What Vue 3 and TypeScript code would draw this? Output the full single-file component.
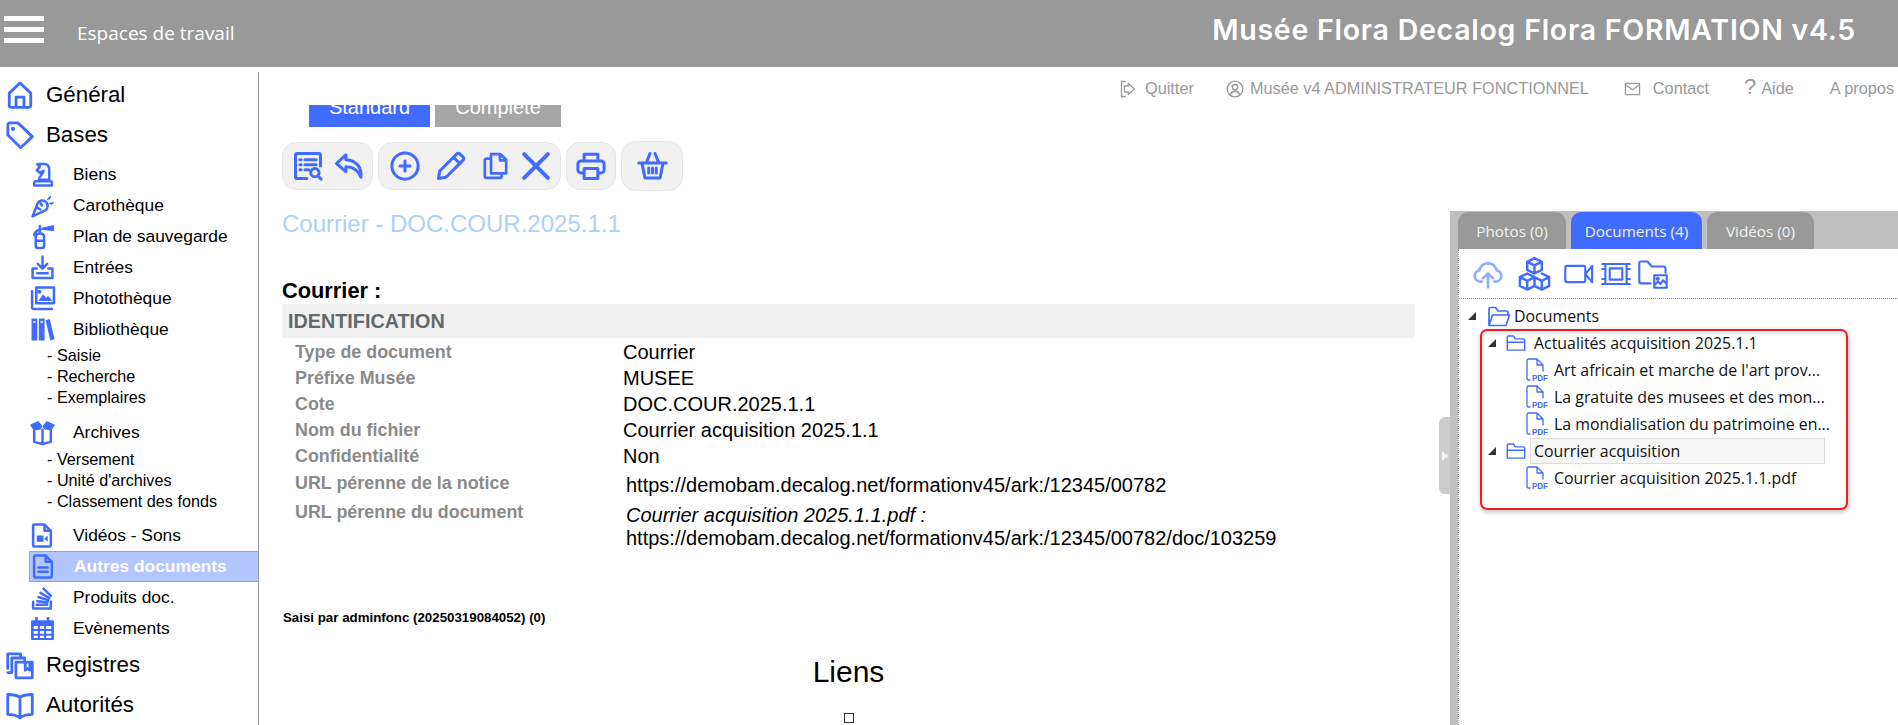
<script setup lang="ts">
interface Glyph {
  s?: string;
  f?: string;
}
interface MenuRow {
  label: string;
  level: 1 | 2 | 3;
  icon?: string;
  active?: boolean;
  gap?: number;
}

const icons: Record<string, Glyph> = {
  home: { s: "M12 1.8 2.8 10.4v10.4a1.8 1.8 0 0 0 1.8 1.8h14.8a1.8 1.8 0 0 0 1.8-1.8V10.4zM8.6 22.6v-8.8h6.8v8.8" },
  tag: { s: "M1.6 3.2a1.6 1.6 0 0 1 1.6-1.6h7L22.6 13.4 12.6 23 1.6 12z", f: "M6 5a1.8 1.8 0 1 1 0 3.6A1.8 1.8 0 0 1 6 5z" },
  knight: { s: "M7 2h6.5c3.5 0 5 2.5 5 6v9H8.5c0-3.5 4.5-5 4.5-8.5L9.5 10.5 6.5 8l3-3.5zM5.5 18.5h14a1.5 1.5 0 0 1 1.5 1.5v2.5H4V20a1.5 1.5 0 0 1 1.5-1.5z" },
  carrot: { s: "M2.5 22.5 7.5 9.5c2-3 6-3 8-.8s2 5.8-.5 7.8zM7 14l3 1.8M10 9.5l1.5 2.5", f: "M16 7c1-2 2.5-3.5 4.5-5-.2 3-1.5 5-4.5 5zM18 10c1.5-1 3.5-1.3 5.5-.8-1.5 2-3.5 2.5-5.5.8z" },
  extinguisher: { s: "M10 5.5c-3.5 0-5 1.5-6 5M9.5 9c-2.5 0-4 1.5-4 3.5v8.5A2 2 0 0 0 7.5 23h4a2 2 0 0 0 2-2v-8.5c0-2-1.5-3.5-4-3.5zM5.5 16h8M9.5 2v6", f: "M11 3.5 23 1v6l-12-1.5z" },
  entry: { s: "M12 1.5v11M7.5 8.5 12 13l4.5-4.5M6.5 13H2.5v9h19v-9h-4M7 17.5h10" },
  photos: { s: "M6 1.5h17v15H6zM2 5v15.5A1.5 1.5 0 0 0 3.5 22H21", f: "M8 14.5 12.5 8l3 3.5 2-2 4 5zM9 3.5a2 2 0 1 1 0 4 2 2 0 0 1 0-4z" },
  books: { f: "M1.5 1.5H7v21H1.5zM3 4v1.5h2.5V4zM8.5 1.5H14v21H8.5zM10 4v1.5h2.5V4zM15 3l4-1.2 4.5 19.5-4 1.2z" },
  archive: { s: "M4 10v11l8 2 8-2V10M12 9v14", f: "M0 4.5 8 1l4 5 4-5 8 3.5-3.5 5.5-6.5-1-2-3-2 3-6.5 1z" },
  video: { s: "M4 1.5h10l6 6V21a1.5 1.5 0 0 1-1.5 1.5h-14A1.5 1.5 0 0 1 3 21V2.5A1 1 0 0 1 4 1.5zM14 1.5v6h6", f: "M6.5 12H13v6H6.5zM13.5 15l3.5-3v6z" },
  doc: { s: "M4 1.5h10l6 6V21a1.5 1.5 0 0 1-1.5 1.5h-14A1.5 1.5 0 0 1 3 21V2.5A1 1 0 0 1 4 1.5zM14 1.5v6h6M7 13h9M7 17h9" },
  stack: { s: "M3 16v6.5h17V16M6.5 19h10M7 15.5l10 1M8 11.5l9.5 3M10 7.5l8.5 5M13 3.5l7 7" },
  calendar: { f: "M5 1h2.5v3H16V1h2.5v3H22a1 1 0 0 1 1 1v17a1 1 0 0 1-1 1H2a1 1 0 0 1-1-1V5a1 1 0 0 1 1-1h3zM3.5 9.5v3h4v-3zM9.5 9.5v3h4v-3zM15.5 9.5v3h5v-3zM3.5 14.5V17h4v-2.5zM9.5 14.5V17h4v-2.5zM15.5 14.5V17h5v-2.5zM3.5 19v2h4v-2zM9.5 19v2h4v-2zM15.5 19v2h5v-2z" },
  registers: { s: "M1.5 15V2.5h11v2M1.5 2.5h11M5 18.5V6h11v2M5 6h11M8.5 23V9.5h14V23zM8.5 9.5h14M16.5 9.5v7l2-1.5 2 1.500v-7M5 18.5H1.5" },
  book: { s: "M12 5.5C9.5 3.5 5.5 3 1.5 3v17c4 0 7.5.5 10.5 3 3-2.5 6.5-3 10.5-3V3c-4 0-8 .5-10.5 2.5zM12 5.5V23" },
  listSearch: { s: "M11 22H3.5A1.5 1.5 0 0 1 2 20.5v-17A1.5 1.5 0 0 1 3.5 2h17A1.5 1.5 0 0 1 22 3.5V12M5.5 7h1M9.5 7h9M5.5 11h1M9.5 11h9M5.5 15h1M9.500 15h3M17.5 14a3.3 3.3 0 1 1 0 6.6 3.3 3.3 0 0 1 0-6.6zM20 20l2.5 2.5" },
  reply: { s: "M9.5 3 2 10l7.5 6.5v-4c5 0 9.5 1.5 12 8.5 1-7-3-13.5-12-14z" },
  plus: { s: "M12 1.5a10.5 10.5 0 1 1 0 21 10.5 10.5 0 0 1 0-21zM12 8v8M8 12h8" },
  pencil: { s: "M2 22l1-6L16.5 2.5a2 2 0 0 1 2.8 0l2.2 2.2a2 2 0 0 1 0 2.8L8 21zM14 5l5 5" },
  copy: { s: "M8 1.5h8.5l5 5v12H8zM16 1.5V7h5.5M8 5.5H4A1.5 1.5 0 0 0 2.5 7v14.5a1 1 0 0 0 1 1H16a1.5 1.5 0 0 0 1.5-1.500v-2.500" },
  close: { s: "M2.5 2.5l19 19M21.5 2.5l-19 19" },
  printer: { s: "M6.5 8V2.5h11V8M6.5 17.5H4A2.5 2.5 0 0 1 1.5 15v-4.5A2.5 2.5 0 0 1 4 8h16a2.5 2.5 0 0 1 2.5 2.5V15a2.5 2.5 0 0 1-2.5 2.5h-2.5M6.5 14h11v8h-11z" },
  basket: { s: "M1 9.5h22M3.5 9.5 6 21.5h12l2.5-12M7 9.5 10 2M17 9.5 14 2M9 13.5v4M12 13.5v4M15 13.5v4" },
  cloud: { s: "M7 18H5.5A4.5 4.5 0 0 1 5 9.1a7.2 7.2 0 0 1 14 0A4.5 4.5 0 0 1 18.5 18H17M12 22.5V12M8 15.5l4-4 4 4" },
  cubes: { s: "M12 1.5l5 2.5v5.5L12 12 7 9.5V4zM7 4l5 2.5L17 4M12 6.5V12M7 12l5 2.5v6L7 23l-5-2.500v-6zM2 14.5 7 17l5-2.500M7 17v6M17 12l5 2.5v6L17 23l-5-2.500M12 14.5 17 17l5-2.500M17 17v6" },
  camera: { s: "M2.5 5.5h13A1.5 1.5 0 0 1 17 7v10a1.5 1.5 0 0 1-1.5 1.5h-13A1.5 1.5 0 0 1 1 17V7a1.5 1.5 0 0 1 1.5-1.5zM22.5 5.5 17 12l5.5 6.5z" },
  film: { s: "M1 4h22M1 20h22M7 7.5h10v9H7zM3.5 4v16M20.5 4v16M1 8h2.5M1 16h2.5M20.5 8H23M20.5 16H23" },
  folderImage: { s: "M10 19.5H2.5A1.5 1.5 0 0 1 1 18V3.5A1.5 1.5 0 0 1 2.5 2h5L11 6h9.5A1.5 1.5 0 0 1 22 7.5V11M13 13h10v10H13zM13 21l3-3 2 2 2-3 3 3M15.8 15a.8.8 0 1 1 0 1.6.8.8 0 0 1 0-1.6z" },
  folderOpen: { s: "M3 21V5a1.5 1.5 0 0 1 1.5-1.5h5L12 7h8.5A1.5 1.5 0 0 1 22 8.5V11M3 21.5h17L23.5 11H6.5z" },
  folder: { s: "M1.5 20.5V5A1.5 1.5 0 0 1 3 3.5h6L11 7h10a1.5 1.5 0 0 1 1.5 1.5v12zM1.5 11h21" },
  exit: { s: "M7 2H2v20h5M11 8V4.5l8 7.5-8 7.5V16H6V8z" },
  user: { s: "M12 1.5a10.5 10.5 0 1 1 0 21 10.5 10.5 0 0 1 0-21zM12 6a3.5 3.5 0 1 1 0 7 3.5 3.5 0 0 1 0-7zM6 19c1-3 3-4 6-4s5 1 6 4" },
  mail: { s: "M2 4h20v16H2zM2 6l10 7 10-7" },
};

const menu: MenuRow[] = [
  { label: "Général", level: 1, icon: "home" },
  { label: "Bases", level: 1, icon: "tag" },
  { label: "Biens", level: 2, icon: "knight", gap: 4 },
  { label: "Carothèque", level: 2, icon: "carrot" },
  { label: "Plan de sauvegarde", level: 2, icon: "extinguisher" },
  { label: "Entrées", level: 2, icon: "entry" },
  { label: "Photothèque", level: 2, icon: "photos" },
  { label: "Bibliothèque", level: 2, icon: "books" },
  { label: "- Saisie", level: 3 },
  { label: "- Recherche", level: 3 },
  { label: "- Exemplaires", level: 3 },
  { label: "Archives", level: 2, icon: "archive", gap: 9 },
  { label: "- Versement", level: 3, gap: 1 },
  { label: "- Unité d'archives", level: 3 },
  { label: "- Classement des fonds", level: 3 },
  { label: "Vidéos - Sons", level: 2, icon: "video", gap: 8 },
  { label: "Autres documents", level: 2, icon: "doc", active: true },
  { label: "Produits doc.", level: 2, icon: "stack" },
  { label: "Evènements", level: 2, icon: "calendar" },
  { label: "Registres", level: 1, icon: "registers", gap: 1 },
  { label: "Autorités", level: 1, icon: "book" },
];

const toolGroups: string[][] = [
  ["listSearch", "reply"],
  ["plus", "pencil", "copy", "close"],
  ["printer"],
  ["basket"],
];

const fields = [
  { label: "Type de document", value: "Courrier" },
  { label: "Préfixe Musée", value: "MUSEE" },
  { label: "Cote", value: "DOC.COUR.2025.1.1" },
  { label: "Nom du fichier", value: "Courrier acquisition 2025.1.1" },
  { label: "Confidentialité", value: "Non" },
];

const panelTools = ["cloud", "cubes", "camera", "film", "folderImage"];

const actuFiles = [
  "Art africain et marche de l'art prov...",
  "La gratuite des musees et des mon...",
  "La mondialisation du patrimoine en...",
];
</script>

<template>
  <div class="page">
    <header class="topbar">
      <div class="burger"><span></span><span></span><span></span></div>
      <div class="workspaces">Espaces de travail</div>
      <div class="app-title">Musée Flora Decalog Flora FORMATION v4.5</div>
    </header>

    <div class="body">
      <nav class="sidebar">
        <div
          v-for="row in menu"
          :key="row.label"
          class="menu-row"
          :class="[`level-${row.level}`, { active: row.active }]"
          :style="row.gap ? { marginTop: row.gap + 'px' } : undefined"
        >
          <span v-if="row.icon" class="menu-icon">
            <svg viewBox="0 0 24 24" class="ico">
              <path v-if="icons[row.icon].s" :d="icons[row.icon].s" class="line" />
              <path v-if="icons[row.icon].f" :d="icons[row.icon].f" class="solid" />
            </svg>
          </span>
          <span>{{ row.label }}</span>
        </div>
      </nav>

      <div class="content">
        <div class="links">
          <span class="link link-quit">
            <svg viewBox="0 0 24 24" class="ico link-ico"><path :d="icons.exit.s" class="line" /></svg>
            Quitter
          </span>
          <span class="link link-user">
            <svg viewBox="0 0 24 24" class="ico link-ico"><path :d="icons.user.s" class="line" /></svg>
            Musée v4 ADMINISTRATEUR FONCTIONNEL
          </span>
          <span class="link link-contact">
            <svg viewBox="0 0 24 24" class="ico link-ico"><path :d="icons.mail.s" class="line" /></svg>
            Contact
          </span>
          <span class="link link-help"><span class="qmark">?</span> Aide</span>
          <span class="link link-about">A propos</span>
        </div>

        <div class="columns">
          <main class="main">
            <div class="view-tabs">
              <div class="view-tab standard"><span>Standard</span></div>
              <div class="view-tab complete"><span>Complete</span></div>
            </div>

            <div class="toolbar">
              <div v-for="(group, i) in toolGroups" :key="i" class="tool-group" :class="`group-${i}`">
                <svg v-for="name in group" :key="name" viewBox="0 0 24 24" class="ico tool" :class="`tool-${name}`">
                  <path :d="icons[name].s" class="line" />
                </svg>
              </div>
            </div>

            <h2 class="notice-title">Courrier - DOC.COUR.2025.1.1</h2>
            <h3 class="notice-type">Courrier :</h3>
            <div class="section-bar">IDENTIFICATION</div>

            <div v-for="field in fields" :key="field.label" class="field">
              <div class="field-label">{{ field.label }}</div>
              <div class="field-value">{{ field.value }}</div>
            </div>
            <div class="field url-one">
              <div class="field-label">URL pérenne de la notice</div>
              <div class="field-value url">https://demobam.decalog.net/formationv45/ark:/12345/00782</div>
            </div>
            <div class="field url-two">
              <div class="field-label">URL pérenne du document</div>
              <div class="field-value url">
                <em>Courrier acquisition 2025.1.1.pdf :</em><br />
                https://demobam.decalog.net/formationv45/ark:/12345/00782/doc/103259
              </div>
            </div>

            <div class="entered-by">Saisi par adminfonc (20250319084052) (0)</div>
            <div class="links-title">Liens</div>
            <div class="links-box"></div>
          </main>

          <aside class="panel">
            <div class="panel-handle"><i></i></div>
            <div class="panel-tabs">
              <div class="panel-tab tab-photos">Photos (0)</div>
              <div class="panel-tab tab-docs">Documents (4)</div>
              <div class="panel-tab tab-videos">Vidéos (0)</div>
            </div>
            <div class="panel-inner">
              <div class="panel-tools">
                <svg
                  v-for="name in panelTools"
                  :key="name"
                  viewBox="0 0 24 24"
                  class="ico panel-tool"
                  :class="name"
                >
                  <path :d="icons[name].s" class="line" />
                </svg>
              </div>

              <div class="tree">
                <div class="tree-row root">
                  <i class="arrow"></i>
                  <svg viewBox="0 0 24 24" class="ico tree-folder-root"><path :d="icons.folderOpen.s" class="line" /></svg>
                  <span class="tree-label">Documents</span>
                </div>

                <div class="tree-row branch">
                  <i class="arrow"></i>
                  <svg viewBox="0 0 24 24" class="ico tree-folder"><path :d="icons.folder.s" class="line" /></svg>
                  <span class="tree-label">Actualités acquisition 2025.1.1</span>
                </div>
                <div v-for="file in actuFiles" :key="file" class="tree-row leaf">
                  <svg viewBox="0 0 22 24" class="pdf">
                    <path d="M4 22H2.5A1.5 1.5 0 0 1 1 20.5v-18A1.5 1.5 0 0 1 2.5 1H11l6 6v6M11 1v6h6" class="line thin" />
                    <text x="6" y="23" textLength="16" lengthAdjust="spacingAndGlyphs" class="pdf-text">PDF</text>
                  </svg>
                  <span class="tree-label">{{ file }}</span>
                </div>

                <div class="tree-row branch">
                  <i class="arrow"></i>
                  <svg viewBox="0 0 24 24" class="ico tree-folder"><path :d="icons.folder.s" class="line" /></svg>
                  <span class="tree-label selected">Courrier acquisition</span>
                </div>
                <div class="tree-row leaf">
                  <svg viewBox="0 0 22 24" class="pdf">
                    <path d="M4 22H2.5A1.5 1.5 0 0 1 1 20.5v-18A1.5 1.5 0 0 1 2.5 1H11l6 6v6M11 1v6h6" class="line thin" />
                    <text x="6" y="23" textLength="16" lengthAdjust="spacingAndGlyphs" class="pdf-text">PDF</text>
                  </svg>
                  <span class="tree-label">Courrier acquisition 2025.1.1.pdf</span>
                </div>
              </div>
            </div>
            <div class="highlight-box"></div>
          </aside>
        </div>
      </div>
    </div>
  </div>
</template>

<style scoped>
.page {
  height: 725px;
  overflow: hidden;
  display: flex;
  flex-direction: column;
  font-family: "Liberation Sans", Arial, sans-serif;
  color: #000;
  background: #fff;
}

/* Top bar */
.topbar {
  height: 67px;
  flex: none;
  background: #999;
  color: #fff;
  display: flex;
  align-items: center;
}

.burger {
  width: 40px;
  margin-left: 4px;
  margin-top: -8px;
  display: flex;
  flex-direction: column;
  gap: 6px;
}

.burger span {
  display: block;
  height: 5px;
  background: #fff;
}

.workspaces {
  margin-left: 33px;
  font-family: "Open Sans", sans-serif;
  font-size: 19px;
  margin-top: -1px;
}

.app-title {
  margin-left: auto;
  margin-right: 42px;
  margin-top: -9px;
  font-family: Inter, sans-serif;
  font-size: 28.5px;
  font-weight: 600;
  letter-spacing: 0.75px;
}

.body {
  flex: 1;
  min-height: 0;
  display: flex;
}

.ico {
  display: block;
  overflow: visible;
}

.line {
  fill: none;
  stroke: #3f6cff;
  stroke-width: 2;
  stroke-linejoin: round;
  stroke-linecap: round;
}

.line.thin {
  stroke-width: 1.3;
}

.solid {
  fill: #3f6cff;
  fill-rule: evenodd;
}

/* Sidebar */
.sidebar {
  width: 259px;
  flex: none;
  box-sizing: border-box;
  margin-top: 5px;
  padding-top: 3px;
  border-right: 1px solid #999;
}

.menu-row {
  display: flex;
  align-items: center;
  white-space: nowrap;
}

.menu-icon .line {
  stroke-width: 2.4;
}

.level-1 {
  height: 40px;
  font-size: 22.3px;
}

.level-1 .menu-icon {
  width: 46px;
  padding-left: 6px;
  box-sizing: border-box;
}

.level-1 .ico {
  width: 28px;
  height: 30px;
}

.level-2 {
  height: 31px;
  margin-left: 29px;
  font-size: 17.4px;
}

.level-2 .menu-icon {
  width: 44px;
  padding-left: 1px;
  box-sizing: border-box;
}

.level-2 .ico {
  width: 25px;
  height: 25px;
}

.level-3 {
  height: 21px;
  padding-left: 47px;
  font-size: 16.2px;
}

.active {
  box-sizing: border-box;
  background: #b3c6ff;
  border: 1px solid #84a0ff;
  border-right: none;
  color: #fff;
  font-weight: bold;
}

/* Content column */
.content {
  flex: 1;
  min-width: 0;
  display: flex;
  flex-direction: column;
}

.links {
  height: 38px;
  flex: none;
  display: flex;
  align-items: center;
  font-size: 16.3px;
  color: #999;
  white-space: nowrap;
  padding-top: 5px;
  box-sizing: border-box;
}

.link {
  display: flex;
  align-items: center;
  gap: 6px;
}

.link-ico {
  width: 18px;
  height: 18px;
}

.link-ico .line {
  stroke: #999;
  stroke-width: 1.8;
}

.link-quit {
  margin-left: 860px;
}

.link-quit .link-ico {
  width: 20px;
}

.link-user {
  margin-left: 32px;
}

.link-contact {
  margin-left: 35px;
}

.link-contact .link-ico {
  width: 17px;
  margin-right: 6px;
}

.link-help {
  margin-left: 35px;
  gap: 5px;
}

.qmark {
  font-size: 22px;
  line-height: 1;
  margin-top: -3px;
}

.link-about {
  margin-left: 36px;
}

.columns {
  flex: 1;
  min-height: 0;
  display: flex;
}

/* Main notice */
.main {
  flex: 1;
  min-width: 0;
  padding-left: 23px;
  padding-right: 35px;
}

.view-tabs {
  display: flex;
  gap: 5px;
  margin-left: 27px;
  height: 22px;
  overflow: hidden;
}

.view-tab {
  height: 22px;
  display: flex;
  align-items: flex-end;
  justify-content: center;
  color: #fff;
  font-size: 20px;
  line-height: 22px;
}

.view-tab span {
  display: block;
  margin-bottom: 9px;
  flex: none;
}

.standard {
  width: 121px;
  background: #3f6cff;
}

.complete {
  width: 126px;
  background: #a6a6a6;
}

.toolbar {
  margin-top: 14px;
  display: flex;
  align-items: center;
  gap: 5px;
  height: 50px;
}

.tool-group {
  height: 48px;
  box-sizing: border-box;
  display: flex;
  align-items: center;
  background: #f1f1f1;
  border: 1px solid #e6e6e6;
  border-radius: 14px;
}

.group-0 {
  width: 91px;
  padding-left: 10px;
  gap: 11px;
}

.group-1 {
  width: 183px;
  padding-left: 11px;
  gap: 16px;
}

.group-2 {
  width: 50px;
  justify-content: center;
}

.group-3 {
  width: 62px;
  height: 50px;
  justify-content: center;
}

.tool {
  width: 30px;
  height: 30px;
}

.tool .line {
  stroke-width: 2.4;
}

.tool-copy {
  width: 27px;
  margin-right: -4px;
}

.tool-close .line {
  stroke-width: 3.2;
}

.tool-basket {
  width: 33px;
}

.notice-title {
  margin: 20px 0 0;
  font-size: 24px;
  font-weight: normal;
  line-height: 26px;
  color: #add0fb;
}

.notice-type {
  margin: 42px 0 0;
  font-size: 21.8px;
  font-weight: bold;
  line-height: 24px;
}

.section-bar {
  height: 34px;
  margin-top: 1px;
  padding-left: 6px;
  background: #f1f1f1;
  color: #5f6b6b;
  font-size: 19.8px;
  font-weight: bold;
  line-height: 34px;
}

.field {
  display: flex;
  height: 26px;
  align-items: center;
  padding-left: 13px;
}

.section-bar + .field {
  margin-top: 1px;
}

.field-label {
  width: 328px;
  flex: none;
  color: #8a8a8a;
  font-size: 17.9px;
  font-weight: bold;
}

.field-value {
  font-size: 20px;
  white-space: nowrap;
}

.url {
  margin-left: 3px;
}

.url-one {
  height: 28px;
}

.url-one .url {
  padding-top: 4px;
}

.url-two {
  height: auto;
  align-items: flex-start;
  margin-top: 5px;
}

.url-two .field-value {
  line-height: 23px;
  padding-top: 2px;
}

.entered-by {
  margin-top: 60px;
  margin-left: 1px;
  font-size: 13.3px;
  font-weight: bold;
}

.links-title {
  margin-top: 31px;
  font-size: 30px;
  line-height: 32px;
  text-align: center;
}

.links-box {
  width: 8px;
  height: 8px;
  margin: 25px auto 0;
  border: 1px solid #333;
}

/* Right panel */
.panel {
  position: relative;
  width: 448px;
  flex: none;
  margin-top: 106px;
  box-sizing: border-box;
  border-left: 8px solid #c0c0c0;
  display: flex;
  flex-direction: column;
}

.panel-handle {
  position: absolute;
  left: -19px;
  top: 206px;
  width: 11px;
  height: 77px;
  background: #ccc;
  border-radius: 6px 0 0 6px;
  display: flex;
  align-items: center;
  justify-content: center;
}

.panel-handle i {
  border-left: 6px solid #f2f2f2;
  border-top: 5px solid transparent;
  border-bottom: 5px solid transparent;
}

.panel-tabs {
  height: 38px;
  flex: none;
  box-sizing: border-box;
  padding-top: 1px;
  display: flex;
  gap: 5px;
  background: #bfbfbf;
}

.panel-tab {
  display: flex;
  align-items: center;
  justify-content: center;
  border-radius: 10px 10px 0 0;
  background: #999;
  color: #f2f2f2;
  font-family: "Open Sans", sans-serif;
  font-size: 15.3px;
}

.tab-photos {
  width: 108px;
}

.tab-docs {
  width: 131px;
  background: #3f6cff;
}

.tab-videos {
  width: 107px;
}

.panel-inner {
  flex: 1;
  border-left: 1px dotted #999;
}

.panel-tools {
  height: 50px;
  box-sizing: border-box;
  display: flex;
  align-items: center;
  padding-left: 14px;
  gap: 7px;
  border-bottom: 1px dotted #999;
}

.panel-tool {
  width: 30px;
  height: 30px;
}

.panel-tool .line {
  stroke-width: 1.7;
}

.cloud .line {
  stroke: #8fb0ff;
  stroke-width: 2.2;
}

.panel-tool.cubes {
  width: 35px;
  height: 35px;
  margin-left: 7px;
  margin-right: 5px;
}

.tree {
  padding-top: 3px;
  font-family: "Open Sans", sans-serif;
  font-size: 15.9px;
  color: #111;
}

.tree-row {
  height: 27px;
  display: flex;
  align-items: center;
  white-space: nowrap;
}

.arrow {
  flex: none;
  width: 0;
  height: 0;
  border-bottom: 8px solid #333;
  border-left: 8px solid transparent;
}

.root {
  padding-left: 9px;
}

.tree-folder-root {
  width: 24px;
  height: 24px;
  margin-left: 10px;
}

.branch {
  padding-left: 29px;
}

.tree-folder {
  width: 20px;
  height: 20px;
  margin-left: 10px;
  margin-right: 4px;
}

.tree-folder .line,
.tree-folder-root .line {
  stroke-width: 1.7;
}

.tree-label {
  padding-left: 4px;
  box-sizing: border-box;
}

.selected {
  width: 295px;
  height: 26px;
  line-height: 24px;
  padding-left: 3px;
  background: #f6f6f6;
  border: 1px solid #ddd;
}

.leaf {
  padding-left: 67px;
}

.pdf {
  width: 22px;
  height: 24px;
  overflow: visible;
  margin-right: 2px;
}

.pdf-text {
  fill: #3f6cff;
  font-family: "Liberation Sans", sans-serif;
  font-size: 9px;
  font-weight: bold;
}

.highlight-box {
  position: absolute;
  left: 22px;
  top: 118px;
  width: 368px;
  height: 181px;
  box-sizing: border-box;
  border: 2px solid #ee1c25;
  border-radius: 7px;
  box-shadow: 1px 2px 5px rgba(0, 0, 0, 0.25), inset 1px 2px 4px rgba(0, 0, 0, 0.12);
  pointer-events: none;
}
</style>

<style>
html,
body {
  margin: 0;
  overflow: hidden;
}
</style>
